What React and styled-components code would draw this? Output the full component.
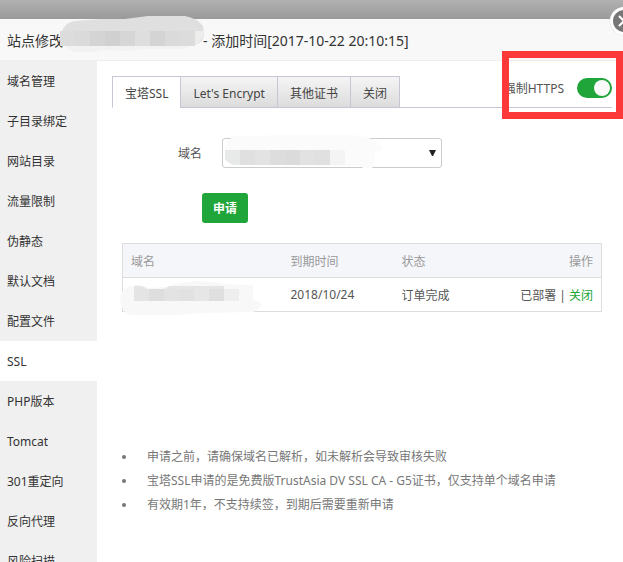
import { useState } from 'react';
import styled, { createGlobalStyle } from 'styled-components';

const GlobalStyle = createGlobalStyle`
  *, *::before, *::after {
    box-sizing: border-box;
  }
  body {
    color: #555;
    font-family: "Noto Sans", "Noto Sans CJK SC", sans-serif;
    font-size: 12px;
    margin: 0;
  }
  button, select {
    font-family: inherit;
    font-size: inherit;
  }
`;

const Backdrop = styled.div`
  background: linear-gradient(#b1b1b1, #9a9a9a 19px);
  display: flex;
  flex-direction: column;
  height: 100vh;
  overflow: hidden;
  padding-top: 19px;
`;

const Dialog = styled.section`
  background: #fff;
  display: flex;
  flex: 1;
  flex-direction: column;
  min-height: 0;
  position: relative;
`;

const TitleBar = styled.h1`
  align-items: center;
  background: #f8f8f8;
  border-bottom: 1px solid #eee;
  color: #333;
  display: flex;
  font-size: 14px;
  font-weight: normal;
  height: 42px;
  margin: 0;
  padding: 0 7px;
  white-space: nowrap;
`;

const HiddenName = styled.span`
  height: 20px;
  position: relative;
  width: 140px;
  svg {
    left: -3px;
    position: absolute;
    top: -15px;
  }
`;

const CloseButton = styled.button`
  background: #777;
  border: 3px solid #fff;
  border-radius: 50%;
  box-shadow: 0 0 1px #bbb;
  height: 28px;
  padding: 0;
  position: absolute;
  right: -15px;
  top: -12px;
  width: 28px;
  svg {
    display: block;
    margin: auto;
  }
`;

const Body = styled.div`
  display: flex;
  flex: 1;
  min-height: 0;
  overflow: hidden;
`;

const Sidebar = styled.nav`
  background: #f0f0f0;
  flex: none;
  width: 97px;
`;

const SidebarLink = styled.a`
  background: ${({ $active }) => ($active ? '#fff' : 'transparent')};
  color: #333;
  display: block;
  line-height: 38px;
  padding: 2px 0 0 7px;
  text-decoration: none;
`;

const Main = styled.main`
  flex: 1;
  min-width: 0;
  padding: 15px 11px 0 15px;
`;

const TabBar = styled.div`
  border-bottom: 1px solid #c8c6d6;
  display: flex;
  height: 32px;
`;

const Tab = styled.button`
  background: ${({ $active }) => ($active ? '#fff' : 'linear-gradient(#f5f5f5, #dcdcdc)')};
  border: 1px solid #c8c6d6;
  border-bottom-color: ${({ $active }) => ($active ? '#fff' : '#c8c6d6')};
  color: #444;
  height: 32px;
  padding: 2px 12px 0;
  white-space: nowrap;
  & + & {
    margin-left: -1px;
  }
`;

const ForceHttps = styled.label`
  align-items: center;
  display: flex;
  gap: 13px;
  height: 24px;
  margin-left: auto;
  white-space: nowrap;
`;

const Switch = styled.input`
  appearance: none;
  background: ${({ checked }) => (checked ? '#20a53a' : '#ccc')};
  border-radius: 10px;
  height: 20px;
  margin: 0;
  padding: 2px;
  width: 35px;
  &::before {
    background: #fafafa;
    border-radius: 50%;
    content: '';
    display: block;
    height: 16px;
    margin-left: ${({ checked }) => (checked ? '15px' : '0')};
    width: 16px;
  }
`;

const Highlight = styled.div`
  border: 7px solid #fc3838;
  height: 68px;
  pointer-events: none;
  position: absolute;
  right: 0;
  top: 32px;
  width: 121px;
`;

const Content = styled.div`
  padding: 30px 10px 0;
`;

const Field = styled.div`
  align-items: center;
  display: flex;
  gap: 20px;
  label {
    text-align: right;
    width: 80px;
  }
`;

const SelectWrap = styled.div`
  flex: 0 1 220px;
  position: relative;
  svg {
    pointer-events: none;
    position: absolute;
  }
  .blur {
    left: 2px;
    top: -3px;
  }
  .arrow {
    right: 6px;
    top: 12px;
  }
`;

const Select = styled.select`
  appearance: none;
  background: #fff;
  border: 1px solid #ccc;
  border-radius: 3px;
  display: block;
  height: 30px;
  width: 100%;
`;

const ApplyButton = styled.button`
  background: #20a53a;
  border: 0;
  border-radius: 3px;
  color: #fff;
  display: block;
  font-weight: bold;
  height: 30px;
  margin: 25px 0 20px 80px;
  padding: 0 11px;
`;

const CertTable = styled.table`
  border: 1px solid #ddd;
  border-collapse: collapse;
  table-layout: fixed;
  width: 100%;
  th, td {
    border-bottom: 1px solid #ddd;
    height: 34px;
    padding: 0 8px;
    position: relative;
    text-align: left;
    white-space: nowrap;
  }
  th {
    background: #f5f6fa;
    color: #999;
    font-weight: normal;
  }
  th:last-child, td:last-child {
    text-align: right;
  }
  td svg {
    left: -4px;
    position: absolute;
    top: 1px;
  }
  a {
    color: #20a53a;
    text-decoration: none;
  }
`;

const Notes = styled.ul`
  color: #777;
  line-height: 24px;
  list-style: none;
  margin: 133px 0 0;
  padding: 0;
  li {
    align-items: center;
    display: flex;
    gap: 21px;
  }
  li::before {
    background: #777;
    border-radius: 50%;
    content: '';
    flex: none;
    height: 4px;
    width: 4px;
  }
`;

const menu = [
  '域名管理',
  '子目录绑定',
  '网站目录',
  '流量限制',
  '伪静态',
  '默认文档',
  '配置文件',
  'SSL',
  'PHP版本',
  'Tomcat',
  '301重定向',
  '反向代理',
  '风险扫描',
];

const tabs = ['宝塔SSL', "Let's Encrypt", '其他证书', '关闭'];

const Cells = ({ x, y, width, height, colors }) =>
  colors.map((color, i) => (
    <rect key={i} x={x + i * width} y={y} width={width} height={height} fill={color} />
  ));

const TitleBlur = () => (
  <svg width="145" height="38" aria-hidden="true">
    <path d="M1 22Q2 8 15 6L40 4L65 4L88 1H125Q137 3 143 11L144 20Q144 25 139 28L133 31H1Z" fill="#dfdfdf" />
    <path d="M5 30H134L122 34H82L68 36L44 35L34 37H14Q7 35 5 30Z" fill="#f2f2f2" />
    <path d="M135 16H144Q144 24 138 28L135 29Z" fill="#ededeb" />
    <Cells
      x={0}
      y={16}
      width={15}
      height={15}
      colors={['#dcdcdc', '#dadada', '#d4d4d4', '#d0d0d0', '#d6d6d6', '#dedede', '#d4d4d4', '#dadada', '#dcdcdc']}
    />
  </svg>
);

const SelectBlur = () => (
  <svg className="blur" width="160" height="36" aria-hidden="true">
    <path d="M1 16Q2 3 12 1L60 0H130Q155 3 159 15L151 17V31Q143 37 136 31L12 30Q2 28 1 16Z" fill="#fbfbfb" />
    <path d="M1 15H16V30H9Q3 27 1 24Z" fill="#e8eaea" />
    <Cells
      x={16}
      y={15}
      width={15}
      height={15}
      colors={['#e0e0e0', '#e3e3e3', '#dddddd', '#dbdbdb', '#e2e2e2', '#e0e0e0', '#f4f4f4']}
    />
  </svg>
);

const RowBlur = () => (
  <svg width="144" height="38" aria-hidden="true">
    <path d="M1 19Q2 10 11 7Q22 4 29 9L48 8Q60 3 78 2Q95 3 103 5L134 6V21L142 23Q143 30 134 33L84 34L58 36H12Q2 34 1 19Z" fill="#f8f8f8" />
    <path d="M15 7Q24 6 28 10H45L50 7H105V22H15Z" fill="#e5e5e5" />
    <Cells
      x={15}
      y={10}
      width={15}
      height={12}
      colors={['#e4e4e4', '#dedede', '#e3e3e3', '#e1e1e1', '#e6e6e6', '#dfdfdf', '#eeeeee']}
    />
  </svg>
);

const App = () => {
  const [https, setHttps] = useState(true);
  const [tab, setTab] = useState(0);

  return (
    <Backdrop>
      <GlobalStyle />
      <Dialog role="dialog" aria-labelledby="title">
        <TitleBar id="title">
          <span>站点修改</span>
          <HiddenName>
            <TitleBlur />
          </HiddenName>
          <span>- 添加时间[2017-10-22 20:10:15]</span>
        </TitleBar>
        <Body>
          <Sidebar>
            {menu.map((item) => (
              <SidebarLink key={item} href="#" $active={item === 'SSL'}>
                {item}
              </SidebarLink>
            ))}
          </Sidebar>
          <Main>
            <TabBar>
              {tabs.map((name, i) => (
                <Tab key={name} type="button" $active={tab === i} onClick={() => setTab(i)}>
                  {name}
                </Tab>
              ))}
              <ForceHttps>
                强制HTTPS
                <Switch type="checkbox" checked={https} onChange={() => setHttps(!https)} />
              </ForceHttps>
            </TabBar>
            <Content>
              <Field>
                <label htmlFor="domain">域名</label>
                <SelectWrap>
                  <Select id="domain" />
                  <SelectBlur />
                  <svg className="arrow" width="7" height="6" aria-hidden="true">
                    <path d="M0 0H7L4 6H3Z" fill="#222" />
                  </svg>
                </SelectWrap>
              </Field>
              <ApplyButton type="button">申请</ApplyButton>
              <CertTable>
                <colgroup>
                  <col width="160" />
                  <col width="111" />
                  <col width="80" />
                  <col />
                </colgroup>
                <thead>
                  <tr>
                    <th>域名</th>
                    <th>到期时间</th>
                    <th>状态</th>
                    <th>操作</th>
                  </tr>
                </thead>
                <tbody>
                  <tr>
                    <td>
                      <RowBlur />
                    </td>
                    <td>2018/10/24</td>
                    <td>订单完成</td>
                    <td>
                      已部署 | <a href="#">关闭</a>
                    </td>
                  </tr>
                </tbody>
              </CertTable>
              <Notes>
                <li>申请之前，请确保域名已解析，如未解析会导致审核失败</li>
                <li>宝塔SSL申请的是免费版TrustAsia DV SSL CA - G5证书，仅支持单个域名申请</li>
                <li>有效期1年，不支持续签，到期后需要重新申请</li>
              </Notes>
            </Content>
          </Main>
        </Body>
        <Highlight />
        <CloseButton type="button" aria-label="关闭">
          <svg width="12" height="12" aria-hidden="true">
            <path d="M1 1L11 11M11 1L1 11" stroke="#fff" strokeWidth="2" />
          </svg>
        </CloseButton>
      </Dialog>
    </Backdrop>
  );
};

export default App;
